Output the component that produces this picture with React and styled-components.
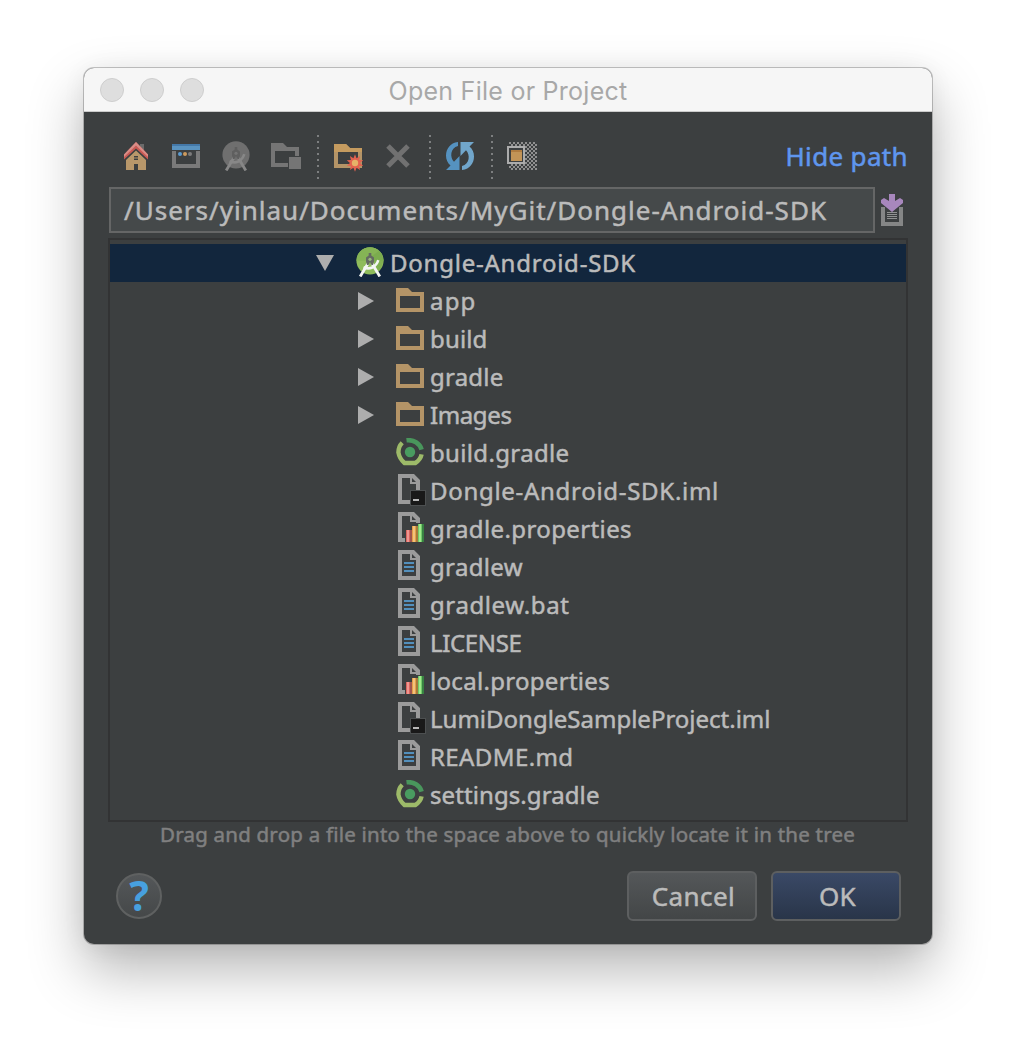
import React, { useLayoutEffect, useRef, useState } from "react";
import styled, { createGlobalStyle } from "styled-components";

const GlobalStyle = createGlobalStyle`
  * { box-sizing: border-box; }
  html, body { margin: 0; background: #fff; }
  body { font-family: "Noto Sans", "Open Sans", sans-serif; }
`;

const Desktop = styled.main`
  width: 1016px;
  height: 1044px;
  padding: 68px 84px 100px;
  background: #fff;
  overflow: hidden;
`;

const Dialog = styled.section`
  display: flex;
  flex-direction: column;
  width: 848px;
  height: 876px;
  border-radius: 10px;
  overflow: hidden;
  background: #3c3f40;
  box-shadow: 0 0 0 1px rgba(0, 0, 0, 0.22), 0 26px 56px rgba(0, 0, 0, 0.29),
    0 2px 24px rgba(0, 0, 0, 0.06);
`;

const TitleBar = styled.header`
  display: grid;
  grid-template-columns: 1fr auto 1fr;
  align-items: center;
  flex: none;
  height: 44px;
  padding: 0 16px;
  background: #f6f6f6;
  border-bottom: 1px solid #cbcbcb;
`;

const Lights = styled.div`
  display: flex;
  gap: 16px;
`;

const Light = styled.span`
  width: 24px;
  height: 24px;
  border-radius: 50%;
  background: #dedede;
  border: 1px solid #cecece;
`;

const Title = styled.h1`
  margin: 0;
  padding-top: 2px;
  font: 400 25px/40px Inter, Roboto, sans-serif;
  color: #a8a8a8;
`;

const Body = styled.div`
  display: flex;
  flex-direction: column;
  flex: 1;
  padding: 19px 24px 22px;
`;

const Toolbar = styled.div`
  display: flex;
  align-items: center;
  height: 50px;
  padding-left: 3px;
`;

const ToolButton = styled.span`
  display: flex;
  align-items: center;
  justify-content: center;
  width: 50px;
  height: 50px;
`;

const Separator = styled.span`
  width: 12px;
  height: 44px;
  margin-top: 2px;
  padding-left: 6px;
  &::before {
    content: "";
    display: block;
    width: 2px;
    height: 100%;
    background: repeating-linear-gradient(#7d7f80 0 2px, transparent 2px 6px);
  }
`;

const PathLink = styled.a`
  margin-left: auto;
  font-size: 26px;
  line-height: 40px;
  color: #5f96ee;
`;

const PathRow = styled.div`
  display: flex;
  align-items: center;
  height: 46px;
  margin-top: 6px;
  padding-left: 1px;
`;

const PathField = styled.div`
  display: flex;
  align-items: center;
  width: 766px;
  height: 46px;
  padding-left: 13px;
  margin-right: 6px;
  border: 2px solid #656666;
  background: #45494a;
  color: #bbbbbb;
  font-size: 26px;
  line-height: 42px;
`;

const Tree = styled.div`
  height: 584px;
  margin-top: 5px;
  padding-top: 4px;
  border: 2px solid #323334;
`;

const TreeRow = styled.div`
  display: flex;
  align-items: center;
  height: 38px;
  padding-left: ${(p) => 206 + p.$depth * 40}px;
  background: ${(p) => (p.$selected ? "#12263d" : "transparent")};
  color: #bbbbbb;
  font-size: 24px;
  line-height: 38px;
`;

const ArrowSlot = styled.span`
  display: flex;
  width: 40px;
`;

const IconSlot = styled.span`
  display: flex;
  align-items: center;
  width: 34px;
  height: 36px;
  margin-bottom: 2px;
  flex: none;
`;

const Hint = styled.p`
  margin: 0;
  padding-left: 52px;
  height: 26px;
  font-size: 20.5px;
  line-height: 24px;
  color: #808080;
`;

const Footer = styled.footer`
  display: flex;
  align-items: center;
  gap: 14px;
  margin-top: 23px;
  padding: 0 7px 0 8px;
`;

const HelpButton = styled.button`
  display: flex;
  align-items: center;
  justify-content: center;
  width: 46px;
  height: 46px;
  margin: 0 auto 0 0;
  padding: 0 0 2px;
  border: 2px solid #5f6161;
  border-radius: 50%;
  background: linear-gradient(#545759, #454849);
  color: #47a0df;
  font: 700 41px/42px "Noto Sans", sans-serif;
`;

const PushButton = styled.button`
  width: 130px;
  height: 50px;
  padding: 0 0 0 3px;
  border: 2px solid #5d5f60;
  border-radius: 6px;
  background: ${(p) =>
    p.$primary
      ? "linear-gradient(#3a4966, #293549)"
      : "linear-gradient(#545759, #434647)"};
  color: #bbbbbb;
  font: 400 26px/44px "Noto Sans", sans-serif;
`;

const TextSpan = styled.span`
  display: inline-block;
  white-space: pre;
  -webkit-text-stroke: ${(p) => (p.$light ? "0" : "0.5px currentColor")};
`;

/* Tracks a label so that it fills the given width. */
function Label({ width, light, children }) {
  const ref = useRef(null);
  const [spacing, setSpacing] = useState(0);
  useLayoutEffect(() => {
    const natural = ref.current.getBoundingClientRect().width;
    setSpacing((width - natural) / children.length);
  }, [width, children]);
  return (
    <TextSpan ref={ref} $light={light} style={{ letterSpacing: `${spacing}px` }}>
      {children}
    </TextSpan>
  );
}

const Icon = ({ w, h, children, ...rest }) => (
  <svg width={w} height={h} viewBox={`0 0 ${w} ${h}`} {...rest}>
    {children}
  </svg>
);

const HomeIcon = () => (
  <Icon w={24} h={28}>
    <path d="M16 2h4v8h-4z" fill="#6b6b6b" />
    <path d="M2 28V18L12 8.500 22 18v10h-8v-6h-4v6z" fill="#b8976a" />
    <path d="M12 0l12 12.500v5L12 6.500 0 17.500v-5z" fill="#c95a54" />
    <path d="M12 0l12 12.500v2.500L12 3.500 0 15v-2.500z" fill="#d98d87" />
    <path d="M10 14h4v1.500h-4zM10 16.500h4V18h-4z" fill="#3c3f40" />
  </Icon>
);

const DesktopIcon = () => (
  <Icon w={28} h={24}>
    <path d="M0 0h28v6H0z" fill="#5a93c0" />
    <path d="M0 0h28v2H0z" fill="#4478a8" />
    <path d="M0 7h4v13h20V7h4v17H0z" fill="#7a7a7a" />
    <circle cx="8" cy="10" r="2" fill="#5a9bd0" />
    <circle cx="13" cy="10" r="2" fill="#cd9a5d" />
    <circle cx="18" cy="10" r="2" fill="#7c7c7c" />
  </Icon>
);

const StudioIcon = ({ disabled }) => {
  const disc = disabled ? "#6f6f6f" : "#8fbc5b";
  const leg = disabled ? "#878787" : "#f4f6f3";
  const hub = disabled ? "#5f5f5f" : "#646a62";
  return (
    <Icon w={28} h={30}>
      <circle cx="14" cy="13.800" r="13.600" fill={disc} />
      {!disabled && (
        <>
          <path d="M.4 13.800a13.600 13.600 0 0 1 27.200 0z" fill="#85b455" />
          <path d="M16 9l7-5 3 3 1.500 7-3 8-3 2z" fill="#72a347" opacity=".5" />
        </>
      )}
      <path d="M12 16.500L4.200 29.500M16 16.500l7.800 13" stroke={leg} strokeWidth="2.800" />
      <path d="M7.500 20.200c6 2.800 12.500.300 14.800-7" fill="none" stroke={leg} strokeWidth="2.600" />
      <path d="M12.700 6h2.600v2.500l2.700 2v4l-1 3.500h-1.500L14 15l-1.500 3H11l-1-3.500v-4l2.700-2z" fill={hub} />
      <circle cx="14" cy="12.300" r="1.600" fill={disabled ? "#747474" : "#9ab57e"} />
    </Icon>
  );
};

const ModuleIcon = () => (
  <Icon w={30} h={26}>
    <path d="M0 0h12l4 4h12v20H0zM4 8v12h20V8z" fill="#757575" fillRule="evenodd" />
    <path d="M17 13h13v13H17z" fill="#3c3f40" />
    <path d="M18 14h12v12H18z" fill="#757575" />
  </Icon>
);

const FolderIcon = ({ children }) => (
  <Icon w={28} h={24} overflow="visible">
    <path d="M0 0h12l4 4h12v20H0zM4 8v12h20V8z" fill="#b49467" fillRule="evenodd" />
    {children}
  </Icon>
);

const spikes = Array.from({ length: 20 }, (_, i) => {
  const r = i % 2 ? 5 : 8.700;
  const a = (i * Math.PI) / 10 - Math.PI / 2;
  return `${21 + r * Math.cos(a)},${19 + r * Math.sin(a)}`;
}).join(" ");

const NewFolderIcon = () => (
  <FolderIcon>
    <path d="M0 0h12l4 4h12v4H0z" fill="#c59b5f" />
    <polygon points={spikes} fill="#e2614f" />
    <circle cx="21" cy="19" r="3.200" fill="#e6b268" />
  </FolderIcon>
);

const DeleteIcon = () => (
  <Icon w={24} h={24}>
    <path d="M2 2l20 20M22 2L2 22" stroke="#717171" strokeWidth="5" />
  </Icon>
);

const RefreshIcon = () => (
  <Icon w={28} h={28}>
    <path d="M12 0C4 1 0 7 0 13.500c0 4 1.500 7.500 4.500 10L0 28h13.500V14L8 19.800C3.800 15.500 4 6 12 4z" fill="#5592c0" />
    <path d="M16 28c8-1 12-7 12-13.500 0-4-1.500-7.500-4.500-10L28 0H14.500v14L20 8.200C24.200 12.500 24 22 16 24z" fill="#71a6cb" />
  </Icon>
);

const HiddenIcon = () => (
  <Icon w={30} h={28} shapeRendering="crispEdges">
    <defs>
      <pattern id="checks" width="4" height="4" patternUnits="userSpaceOnUse">
        <path d="M0 2h2v2H0zM2 0h2v2H2z" fill="#909090" />
      </pattern>
    </defs>
    <path d="M2 0h28v28H2z" fill="url(#checks)" />
    <path d="M0 4h18v18H0z" fill="#acacac" />
    <path d="M2 6h14v14H2z" fill="#3c3f40" />
    <path d="M4 8h11v11H4z" fill="#c29457" />
    <path d="M4 8h11v2H4z" fill="#b07c40" />
  </Icon>
);

const HistoryIcon = () => (
  <Icon w={22} h={32}>
    <path d="M0 13h4v15h14V13h4v19H0z" fill="#858686" />
    <path d="M6 18h10v1H6zM6 20h10v1H6zM6 22h10v1H6zM6 24h10v1H6z" fill="#909191" />
    <path d="M8 0h6v7l5-3 3 2v3L11 18 0 9V6l3-2 5 3z" fill="#a887bd" />
  </Icon>
);

const ArrowDown = () => (
  <Icon w={18} h={16}>
    <path d="M0 0h18L9 16z" fill="#adadad" />
  </Icon>
);

const ArrowRight = () => (
  <Icon w={18} h={18}>
    <path d="M2 0v18l16-9z" fill="#adadad" />
  </Icon>
);

const GradleIcon = () => (
  <Icon w={28} h={28}>
    <path d="M6.200 4.800C3.500 7.500 2.400 11 2.400 14.500 3 18 5.500 22.500 8.500 25h10.800c3-1.800 5.500-4.800 6.300-8.600" fill="none" stroke="#9dba69" strokeWidth="4.400" strokeLinejoin="round" />
    <path d="M10.500 2.300c7-.8 13.300 3 15.100 9.300" fill="none" stroke="#49965c" strokeWidth="4.600" />
    <circle cx="14" cy="14" r="5.200" fill="#499c60" />
  </Icon>
);

const Sheet = () => (
  <path d="M2 0h16l6 6v24H2zM6 4v22h14V10h-6V4zM16 4v4h4z" fill="#9b9b9b" fillRule="evenodd" />
);

const TextIcon = () => (
  <Icon w={30} h={32}>
    <Sheet />
    <path d="M8 12h10v2H8zM8 16h10v2H8zM8 20h10v2H8z" fill="#5390bd" />
  </Icon>
);

const ModuleFileIcon = () => (
  <Icon w={30} h={32}>
    <Sheet />
    <path d="M14 16h16v16H14z" fill="#4c4f50" />
    <path d="M15 17h14v14H15z" fill="#191919" />
    <path d="M17 25h6v2h-6z" fill="#b8b8b8" />
  </Icon>
);

const PropsIcon = () => (
  <Icon w={30} h={32}>
    <Sheet />
    <path d="M9 17h5v-4h6v-2h8v19H9z" fill="#3c3f40" />
    <path d="M10 18h6v12h-6z" fill="#d9655f" />
    <path d="M11 18h2v12h-2z" fill="#ef9690" />
    <path d="M14 18h2v12h-2z" fill="#9e5450" />
    <path d="M16 14h6v16h-6z" fill="#e39d49" />
    <path d="M17 14h2v16h-2z" fill="#f2c27b" />
    <path d="M20 14h2v16h-2z" fill="#a57a3c" />
    <path d="M22 12h6v18h-6z" fill="#70c867" />
    <path d="M23 12h2v18h-2z" fill="#a0e98c" />
    <path d="M26 12h2v18h-2z" fill="#388142" />
  </Icon>
);

const icons = {
  folder: FolderIcon,
  gradle: GradleIcon,
  module: ModuleFileIcon,
  props: PropsIcon,
  text: TextIcon,
  studio: StudioIcon,
};

const files = [
  { name: "Dongle-Android-SDK", kind: "studio", width: 246, root: true },
  { name: "app", kind: "folder", width: 46.5 },
  { name: "build", kind: "folder", width: 57.5 },
  { name: "gradle", kind: "folder", width: 73.5 },
  { name: "Images", kind: "folder", width: 81.5 },
  { name: "build.gradle", kind: "gradle", width: 139.5 },
  { name: "Dongle-Android-SDK.iml", kind: "module", width: 289 },
  { name: "gradle.properties", kind: "props", width: 202 },
  { name: "gradlew", kind: "text", width: 93 },
  { name: "gradlew.bat", kind: "text", width: 139.5 },
  { name: "LICENSE", kind: "text", width: 91.5 },
  { name: "local.properties", kind: "props", width: 180 },
  { name: "LumiDongleSampleProject.iml", kind: "module", width: 340.5 },
  { name: "README.md", kind: "text", width: 143.5 },
  { name: "settings.gradle", kind: "gradle", width: 169.5 },
];

export default function App() {
  return (
    <Desktop>
      <GlobalStyle />
      <Dialog>
        <TitleBar>
          <Lights>
            <Light />
            <Light />
            <Light />
          </Lights>
          <Title>
            <Label width={239} light>Open File or Project</Label>
          </Title>
        </TitleBar>
        <Body>
          <Toolbar>
            <ToolButton><HomeIcon /></ToolButton>
            <ToolButton><DesktopIcon /></ToolButton>
            <ToolButton><StudioIcon disabled /></ToolButton>
            <ToolButton><ModuleIcon /></ToolButton>
            <Separator />
            <ToolButton><NewFolderIcon /></ToolButton>
            <ToolButton><DeleteIcon /></ToolButton>
            <Separator />
            <ToolButton><RefreshIcon /></ToolButton>
            <Separator />
            <ToolButton><HiddenIcon /></ToolButton>
            <PathLink>
              <Label width={122.5}>Hide path</Label>
            </PathLink>
          </Toolbar>
          <PathRow>
            <PathField>
              <Label width={703}>/Users/yinlau/Documents/MyGit/Dongle-Android-SDK</Label>
            </PathField>
            <HistoryIcon />
          </PathRow>
          <Tree>
            {files.map(({ name, kind, width, root }) => {
              const Glyph = icons[kind];
              return (
                <TreeRow key={name} $depth={root ? 0 : 1} $selected={root}>
                  <ArrowSlot>
                    {root && <ArrowDown />}
                    {kind === "folder" && <ArrowRight />}
                  </ArrowSlot>
                  <IconSlot><Glyph /></IconSlot>
                  <Label width={width}>{name}</Label>
                </TreeRow>
              );
            })}
          </Tree>
          <Hint>
            <Label width={695}>
              Drag and drop a file into the space above to quickly locate it in the tree
            </Label>
          </Hint>
          <Footer>
            <HelpButton>?</HelpButton>
            <PushButton><Label width={83.5}>Cancel</Label></PushButton>
            <PushButton $primary><Label width={37}>OK</Label></PushButton>
          </Footer>
        </Body>
      </Dialog>
    </Desktop>
  );
}
